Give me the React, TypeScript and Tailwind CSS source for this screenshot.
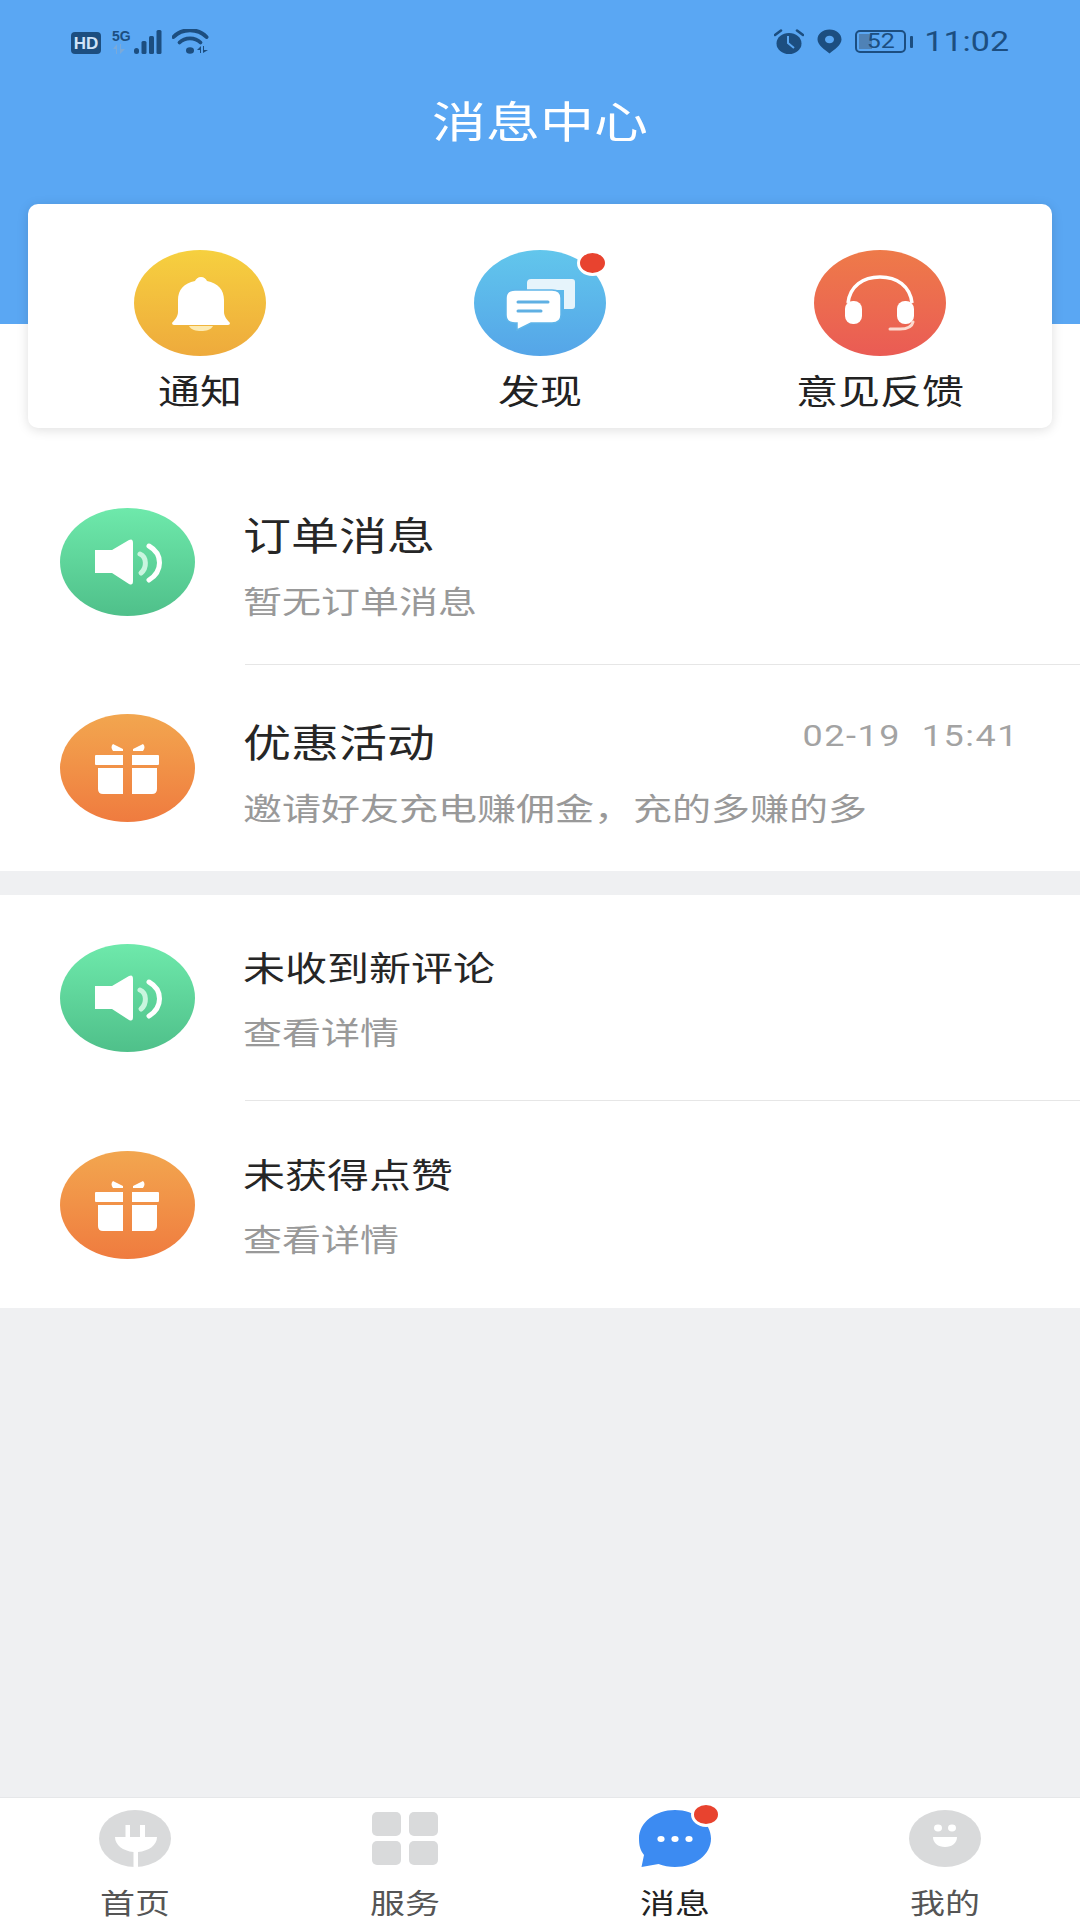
import type { ReactNode } from "react";

const CJK = "font-['Noto_Sans_CJK_SC','Noto_Sans',sans-serif]";
const ICON_DARK = "#1c4e80";

function HdBadge() {
    return (
        <div className="flex h-[22px] w-[30px] items-center justify-center rounded-[4px] bg-[#1c4e80] font-['Liberation_Sans',sans-serif] text-[17px] leading-none font-bold text-[#cfe3f8]">
            HD
        </div>
    );
}

function SignalCluster() {
    return (
        <div className="flex items-end">
            <div className="flex w-[21px] flex-col items-start">
                <span className="block h-[13px] origin-top-left font-['Liberation_Sans',sans-serif] text-[14px] leading-[13px] font-bold text-[#1c4e80]">5G</span>
                <svg width="18" height="10" viewBox="0 0 18 10" className="mt-[1px]">
                    <path d="M1 5 L5 0 V10 H4 V5Z M8 0 V10 L13 5 H9 V0Z" fill="#7ba9d8" />
                </svg>
            </div>
            <svg width="29" height="24" viewBox="0 0 29 24">
                <rect x="1" y="18" width="5" height="6" rx="2.5" fill={ICON_DARK} />
                <rect x="8.5" y="11" width="5" height="13" rx="1.5" fill={ICON_DARK} />
                <rect x="16" y="6" width="5" height="18" rx="1.5" fill={ICON_DARK} />
                <rect x="23.5" y="0" width="5" height="24" rx="1.5" fill={ICON_DARK} />
            </svg>
            <svg width="38" height="25" viewBox="0 0 38 25" className="ml-[10px]">
                <path d="M1.5 8 C10 -1 26 -1 34.5 8" fill="none" stroke={ICON_DARK} strokeWidth="4" strokeLinecap="round" />
                <path d="M7.5 13.5 C13 8 23 8 28.5 13.5" fill="none" stroke={ICON_DARK} strokeWidth="3.8" strokeLinecap="round" />
                <ellipse cx="18" cy="21.5" rx="4" ry="3.2" fill={ICON_DARK} />
                <path d="M25 21 L29 17 V24 H28 V21Z M31 17 V24 L36 21 H32 V17Z" fill={ICON_DARK} />
            </svg>
        </div>
    );
}

function StatusRight() {
    return (
        <div className="flex items-center">
            <svg width="30" height="25" viewBox="0 0 30 25">
                <ellipse cx="15" cy="14.5" rx="12.5" ry="10.5" fill={ICON_DARK} />
                <path d="M14 7 V14 L20 19" fill="none" stroke="#5aa7f3" strokeWidth="2" />
                <path d="M1 6 L7 1.5 M29 6 L23 1.5" stroke={ICON_DARK} strokeWidth="2.6" strokeLinecap="round" />
            </svg>
            <svg width="25" height="25" viewBox="0 0 25 25" className="ml-[13px]">
                <path d="M12.5 0.5 C19.5 0.5 24.5 5 24.5 10.5 C24.5 16 17 21 12.5 24.5 C8 21 0.5 16 0.5 10.5 C0.5 5 5.5 0.5 12.5 0.5Z" fill={ICON_DARK} />
                <ellipse cx="12.5" cy="10.5" rx="4.5" ry="3.8" fill="#5aa7f3" />
            </svg>
            <div className="relative ml-[13px] flex h-[23px] w-[51px] items-center justify-center rounded-[5px] border-[2px] border-[#1c4e80] font-['Roboto',sans-serif] text-[25px] text-[#1c4e80]">
                <div className="absolute top-[2px] bottom-[2px] left-[2px] w-[13px] bg-[#4f82b6]" />
                <span className="relative block scale-y-[0.8] leading-none">52</span>
            </div>
            <div className="ml-[4px] h-[12px] w-[3px] rounded-[1px] bg-[#1c4e80]" />
            <span className="ml-[11px] block scale-y-[0.8] font-['Roboto',sans-serif] text-[34px] leading-[25px] text-[#1c4e80]">11:02</span>
        </div>
    );
}

function Oval({ className, children }: { className: string; children: ReactNode }) {
    return <div className={`shrink-0 rounded-[50%] ${className}`}>{children}</div>;
}

function BellIcon() {
    return (
        <svg viewBox="0 0 132 106" className="h-full w-full">
            <path d="M55 76 H79 C77 80 72 81 67 81 C62 81 57 80 55 76Z" fill="#fdeab0" />
            <path d="M67 27 C70 27 72 29 73 31 C84 33 90 40 90 50 L90 62 C90 66 93 70 96 73 Q96 75 94 75 L40 75 Q38 75 38 73 C41 70 44 66 44 62 L44 50 C44 40 50 33 61 31 C62 29 64 27 67 27Z" fill="#fff" />
        </svg>
    );
}

function ChatIcon() {
    return (
        <svg viewBox="0 0 132 106" className="h-full w-full">
            <path d="M53 33 Q53 29 57 29 H98 Q101 29 101 32 V56 Q101 59 98 59 H90 V40 H53Z" fill="#e6f4fb" />
            <path d="M41 40 H78 Q87 40 87 48 V65 Q87 73 78 73 H57 L43 80 V73 H41 Q32 73 32 65 V48 Q32 40 41 40Z" fill="#fff" stroke="#5fb5e9" strokeWidth="1.5" />
            <path d="M44 52 H74 M44 61 H67" stroke="#5fb0e3" strokeWidth="3" strokeLinecap="round" />
        </svg>
    );
}

function HeadsetIcon() {
    return (
        <svg viewBox="0 0 132 106" className="h-full w-full">
            <path d="M34 53 C36 36 49 27 66 27 C83 27 96 36 98 53" fill="none" stroke="#fff" strokeWidth="3.5" />
            <rect x="31" y="51" width="17" height="23" rx="8" fill="#fff" />
            <rect x="83" y="51" width="17" height="23" rx="8" fill="#fff" />
            <path d="M99 72 C98 77 92 79 86 79 L76 79" fill="none" stroke="#fbd9cf" strokeWidth="3" strokeLinecap="round" />
        </svg>
    );
}

function SpeakerIcon() {
    return (
        <svg viewBox="0 0 135 108" className="h-full w-full">
            <path d="M35 42 H52 L69 32 Q73 30 73 35 V73 Q73 78 69 76 L52 65 H35Z" fill="#fff" />
            <path d="M80 46 C87 49 87 60 81 65" fill="none" stroke="#c9f5df" strokeWidth="5" strokeLinecap="round" />
            <path d="M89 38 C103 46 103 63 89 72" fill="none" stroke="#fff" strokeWidth="5" strokeLinecap="round" />
        </svg>
    );
}

function GiftIcon() {
    return (
        <svg viewBox="0 0 135 108" className="h-full w-full">
            <path d="M53 30 L63 35 V37 H53 Q50 33 53 30Z M83 30 L73 35 V37 H83 Q86 33 83 30Z" fill="#fff" />
            <path d="M36 41 H63 V51 H36 Q35 51 35 50 V42 Q35 41 36 41Z M72 41 H98 Q99 41 99 42 V50 Q99 51 98 51 H72Z" fill="#fff" />
            <path d="M38 54 H63 V80 H43 Q38 80 38 75Z M72 54 H97 V75 Q97 80 92 80 H72Z" fill="#fff" />
        </svg>
    );
}

function RedDot({ className }: { className: string }) {
    return (
        <div className={`absolute rounded-[50%] border-[3px] border-white bg-[#e8432f] ${className}`} />
    );
}

function Shortcut({ label, oval, children, dot }: { label: string; oval: string; children: ReactNode; dot?: boolean }) {
    return (
        <div className="flex flex-col items-center pt-[46px]">
            <Oval className={`relative h-[106px] w-[132px] ${oval}`}>
                {children}
                {dot && <RedDot className="top-[0px] right-[-2px] h-[26px] w-[31px]" />}
            </Oval>
            <span className={`mt-[14px] block h-[40px] scale-y-[0.8] ${CJK} text-[42px] leading-[40px] text-[#222]`}>{label}</span>
        </div>
    );
}

type RowProps = {
    icon: ReactNode;
    oval: string;
    title: string;
    titleClass: string;
    sub: string;
    time?: string;
    textClass: string;
    divider?: boolean;
    rowClass: string;
};

function Row({ icon, oval, title, titleClass, sub, time, textClass, divider, rowClass }: RowProps) {
    return (
        <div className={`flex items-center pl-[60px] ${rowClass}`}>
            <Oval className={`h-[108px] w-[135px] ${oval}`}>{icon}</Oval>
            <div className={`ml-[50px] flex h-full flex-1 items-center ${divider ? "border-b border-[#e6e6e6]" : ""}`}>
                <div className={`-ml-[2px] flex w-full flex-col ${textClass}`}>
                    <div className="flex h-[40px] items-center justify-between pr-[59px]">
                        <span className={`block scale-y-[0.8] ${CJK} leading-[40px] text-[#262626] ${titleClass}`}>{title}</span>
                        {time && (
                            <span className="-mt-[7px] block scale-y-[0.8] font-['Roboto',sans-serif] text-[36px] leading-[40px] tracking-[1.5px] whitespace-pre text-[#a3a3a3]">{time}</span>
                        )}
                    </div>
                    <span className={`block h-[40px] origin-left scale-y-[0.8] ${CJK} text-[39px] leading-[40px] text-[#999]`}>{sub}</span>
                </div>
            </div>
        </div>
    );
}

function TabLabel({ text, active }: { text: string; active?: boolean }) {
    return (
        <span className={`mt-[17px] block h-[36px] scale-y-[0.8] ${CJK} text-[35px] leading-[36px] ${active ? "text-[#222]" : "text-[#555]"}`}>{text}</span>
    );
}

function TabBar() {
    return (
        <div className="mt-auto grid h-[123px] grid-cols-4 border-t border-[#e6e7e9] bg-white">
            <div className="flex flex-col items-center pt-[12px]">
                <svg width="72" height="57" viewBox="0 0 72 57">
                    <ellipse cx="36" cy="28.5" rx="36" ry="28.5" fill="#d9dadb" />
                    <path d="M26.5 15 H31 V27 H41 V15 H46 V27 H58 C58 35 50 41 39 42 V57 H34.5 V42 C24 41 16 35 16 27 H26.5Z" fill="#fff" />
                </svg>
                <TabLabel text="首页" />
            </div>
            <div className="flex flex-col items-center pt-[14px]">
                <div className="mb-[2px] grid h-[53px] w-[66px] grid-cols-2 gap-x-[8px] gap-y-[5px]">
                    <div className="rounded-[5px] bg-[#d9dadb]" />
                    <div className="rounded-[5px] bg-[#d9dadb]" />
                    <div className="rounded-[5px] bg-[#d9dadb]" />
                    <div className="rounded-[5px] bg-[#d9dadb]" />
                </div>
                <TabLabel text="服务" />
            </div>
            <div className="flex flex-col items-center pt-[12px]">
                <div className="relative h-[57px] w-[72px]">
                    <svg width="72" height="57" viewBox="0 0 72 57">
                        <path d="M36 0 C56 0 72 12.5 72 28.5 C72 44.5 56 57 36 57 C30 57 24.5 56 19.5 54 L2.5 57 L5 45 C1 40 0 35 0 28.5 C0 12.5 16 0 36 0Z" fill="#3c8bf2" />
                        <ellipse cx="22" cy="29" rx="3.6" ry="3" fill="#fff" />
                        <ellipse cx="36" cy="29" rx="3.6" ry="3" fill="#fff" />
                        <ellipse cx="50" cy="29" rx="3.6" ry="3" fill="#fff" />
                    </svg>
                    <RedDot className="top-[-8px] right-[-10px] h-[25px] w-[30px]" />
                </div>
                <TabLabel text="消息" active />
            </div>
            <div className="flex flex-col items-center pt-[12px]">
                <svg width="72" height="57" viewBox="0 0 72 57">
                    <ellipse cx="36" cy="28.5" rx="36" ry="28.5" fill="#d9dadb" />
                    <ellipse cx="29" cy="18" rx="4" ry="3.4" fill="#fff" />
                    <ellipse cx="43" cy="18" rx="4" ry="3.4" fill="#fff" />
                    <path d="M24 27 H48 C48 33 43 37 36 37 C29 37 24 33 24 27Z" fill="#fff" />
                </svg>
                <TabLabel text="我的" />
            </div>
        </div>
    );
}

export default function App() {
    const green = "bg-linear-to-b from-[#6ee9ab] to-[#4fc08a]";
    const orange = "bg-linear-to-b from-[#f2a64f] to-[#ef7b3f]";

    return (
        <div className="flex h-[1920px] w-[1080px] flex-col overflow-hidden bg-[#eff0f2]">
            {/* Blue header */}
            <div className="h-[324px] shrink-0 bg-[#5aa7f3]">
                <div className="flex items-center justify-between pt-[29px] pr-[71px] pl-[71px]">
                    <div className="flex items-end gap-[11px]">
                        <HdBadge />
                        <SignalCluster />
                    </div>
                    <StatusRight />
                </div>
                <div className={`mt-[36px] h-[60px] scale-y-[0.8] text-center ${CJK} text-[54px] leading-[60px] text-white`}>消息中心</div>
            </div>

            {/* Shortcuts + first list */}
            <div className="shrink-0 bg-white">
                <div className="relative mx-[28px] -mt-[120px] grid h-[224px] grid-cols-3 rounded-[10px] bg-white px-[2px] shadow-[0_2px_12px_rgba(0,0,0,0.13)]">
                    <Shortcut label="通知" oval="bg-linear-to-b from-[#f6d03f] to-[#eeaa3c]">
                        <BellIcon />
                    </Shortcut>
                    <Shortcut label="发现" oval="bg-linear-to-b from-[#62c6ec] to-[#55a5e8]" dot>
                        <ChatIcon />
                    </Shortcut>
                    <Shortcut label="意见反馈" oval="bg-linear-to-b from-[#ee7a49] to-[#ea5b54]">
                        <HeadsetIcon />
                    </Shortcut>
                </div>
                <div className="mt-[31px]">
                    <Row
                        icon={<SpeakerIcon />}
                        oval={green}
                        title="订单消息"
                        titleClass="text-[48px]"
                        sub="暂无订单消息"
                        textClass="mt-[9px] gap-[26px]"
                        rowClass="h-[206px]"
                        divider
                    />
                    <Row
                        icon={<GiftIcon />}
                        oval={orange}
                        title="优惠活动"
                        titleClass="text-[48px]"
                        sub="邀请好友充电赚佣金，充的多赚的多"
                        time="02-19  15:41"
                        textClass="mt-[9px] gap-[26px]"
                        rowClass="h-[206px]"
                    />
                </div>
            </div>

            {/* Second list */}
            <div className="mt-[24px] shrink-0 bg-white">
                <Row
                    icon={<SpeakerIcon />}
                    oval={green}
                    title="未收到新评论"
                    titleClass="text-[42px]"
                    sub="查看详情"
                    textClass="mt-[1px] gap-[23px]"
                    rowClass="h-[206px]"
                    divider
                />
                <Row
                    icon={<GiftIcon />}
                    oval={orange}
                    title="未获得点赞"
                    titleClass="text-[42px]"
                    sub="查看详情"
                    textClass="mt-[1px] gap-[23px]"
                    rowClass="h-[207px]"
                />
            </div>

            <TabBar />
        </div>
    );
}
